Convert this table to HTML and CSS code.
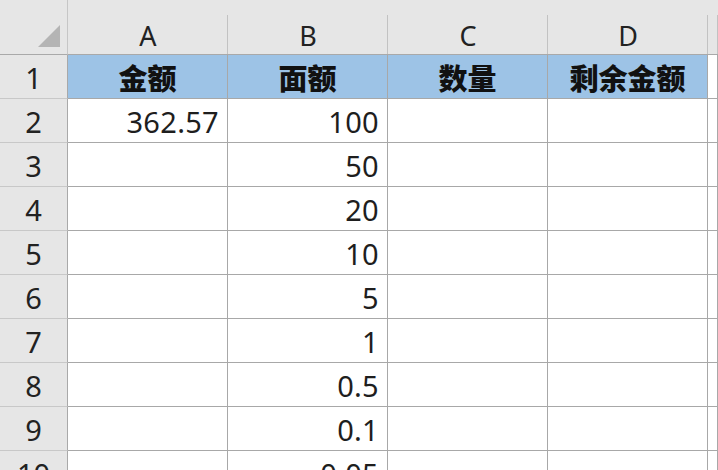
FILE: index.html
```html
<!DOCTYPE html>
<html lang="zh-CN">
<head>
<meta charset="utf-8">
<title>Sheet</title>
<link rel="stylesheet" href="styles.css">
</head>
<body>
<div class="sheet">
  <div class="corner"><svg class="tri" width="24" height="24" viewBox="0 0 24 24"><polygon points="23,1 23,23 1,23" fill="#b4b4b4"/></svg></div>
  <div class="colhead"><span>A</span></div>
  <div class="colhead"><span>B</span></div>
  <div class="colhead"><span>C</span></div>
  <div class="colhead"><span>D</span></div>
  <div class="colhead last"></div>

  <div class="rowhead">1</div>
  <div class="cell title">金额</div>
  <div class="cell title">面额</div>
  <div class="cell title">数量</div>
  <div class="cell title">剩余金额</div>
  <div class="cell"></div>

  <div class="rowhead">2</div>
  <div class="cell num">362.57</div>
  <div class="cell num">100</div>
  <div class="cell"></div>
  <div class="cell"></div>
  <div class="cell"></div>

  <div class="rowhead">3</div>
  <div class="cell"></div>
  <div class="cell num">50</div>
  <div class="cell"></div>
  <div class="cell"></div>
  <div class="cell"></div>

  <div class="rowhead">4</div>
  <div class="cell"></div>
  <div class="cell num">20</div>
  <div class="cell"></div>
  <div class="cell"></div>
  <div class="cell"></div>

  <div class="rowhead">5</div>
  <div class="cell"></div>
  <div class="cell num">10</div>
  <div class="cell"></div>
  <div class="cell"></div>
  <div class="cell"></div>

  <div class="rowhead">6</div>
  <div class="cell"></div>
  <div class="cell num">5</div>
  <div class="cell"></div>
  <div class="cell"></div>
  <div class="cell"></div>

  <div class="rowhead">7</div>
  <div class="cell"></div>
  <div class="cell num">1</div>
  <div class="cell"></div>
  <div class="cell"></div>
  <div class="cell"></div>

  <div class="rowhead">8</div>
  <div class="cell"></div>
  <div class="cell num">0.5</div>
  <div class="cell"></div>
  <div class="cell"></div>
  <div class="cell"></div>

  <div class="rowhead">9</div>
  <div class="cell"></div>
  <div class="cell num">0.1</div>
  <div class="cell"></div>
  <div class="cell"></div>
  <div class="cell"></div>

  <div class="rowhead">10</div>
  <div class="cell"></div>
  <div class="cell num">0.05</div>
  <div class="cell"></div>
  <div class="cell"></div>
  <div class="cell"></div>
</div>
</body>
</html>
```

FILE: styles.css
```css
* { box-sizing: border-box; }
html, body { margin: 0; padding: 0; background: #fff; overflow: hidden; }
body {
  font-family: "Noto Sans", "Noto Sans CJK SC", sans-serif;
  color: #1a1a1a;
  width: 718px;
  height: 470px;
}
.sheet {
  display: grid;
  grid-template-columns: 68px 160px 160px 160px 160px 1fr;
  grid-template-rows: 55px repeat(10, 44px);
  width: 718px;
}
.corner {
  background: #e6e6e6;
  border-bottom: 1px solid #a9a9a9;
  border-right: 1px solid #c6c6c6;
  display: flex;
  align-items: flex-end;
  justify-content: flex-end;
  padding: 0 6px 6px 0;
}
.colhead {
  background: #e6e6e6;
  border-bottom: 1px solid #a9a9a9;
  display: flex;
  align-items: flex-end;
  justify-content: center;
  padding-top: 15px;
  position: relative;
}
.colhead::after {
  content: "";
  position: absolute;
  right: 0;
  top: 15px;
  bottom: 0;
  width: 1px;
  background: #c2c2c2;
}
.colhead span {
  font-size: 27px;
  line-height: 27px;
  padding-bottom: 5px;
  color: #222;
}
.rowhead {
  background: #e6e6e6;
  border-right: 1px solid #a9a9a9;
  border-bottom: 1px solid #c8c8c8;
  display: flex;
  align-items: center;
  justify-content: center;
  font-size: 29px;
  color: #222;
  padding-top: 1px;
}
.cell {
  border-right: 1px solid #a8a8a8;
  border-bottom: 1px solid #a8a8a8;
  display: flex;
  align-items: center;
  font-size: 29px;
  color: #1e1e1e;
  background: #fff;
}
.cell.title {
  background: #9dc3e6;
  justify-content: center;
  font-family: "Noto Sans CJK SC", sans-serif;
  font-weight: 900;
  font-size: 29px;
  color: #111;
}
.cell.title:last-child { background: #fff; }
.cell.num {
  justify-content: flex-end;
  padding-right: 8px;
  padding-top: 2px;
  letter-spacing: 0.3px;
}
```
